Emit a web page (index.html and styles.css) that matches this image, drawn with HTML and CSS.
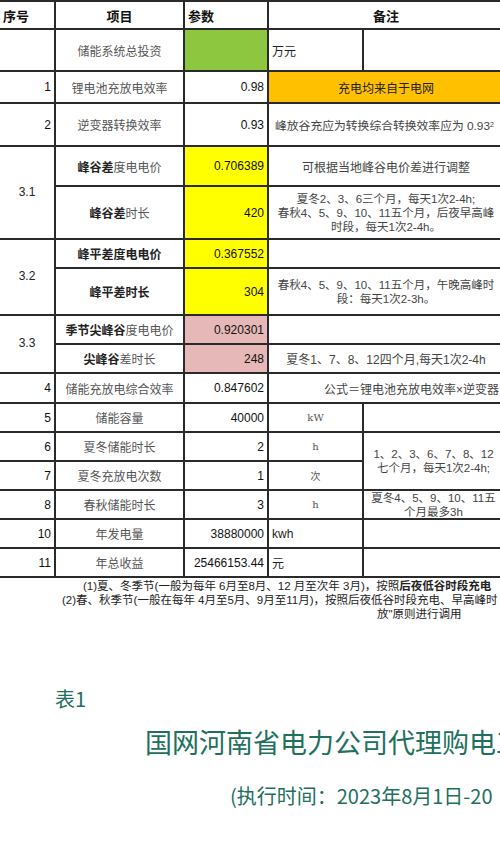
FILE: index.html
```html
<!DOCTYPE html>
<html lang="zh-CN">
<head>
<meta charset="utf-8">
<title>储能收益测算</title>
<link rel="stylesheet" href="styles.css">
</head>
<body>
<div class="sheet">
  <div class="c hd">序号</div>
  <div class="c hd ctr">项目</div>
  <div class="c hd">参数</div>
  <div class="c hd ctr span2">备注</div>

  <div class="c"></div>
  <div class="c ctr item">储能系统总投资</div>
  <div class="c green"></div>
  <div class="c item unit-l">万元</div>
  <div class="c"></div>

  <div class="c num">1</div>
  <div class="c ctr item">锂电池充放电效率</div>
  <div class="c num">0.98</div>
  <div class="c ctr span2 orange">充电均来自于电网</div>

  <div class="c num">2</div>
  <div class="c ctr item">逆变器转换效率</div>
  <div class="c num">0.93</div>
  <div class="c span2 note-l">峰放谷充应为转换综合转换效率应为 0.93<sup>2</sup></div>

  <div class="c ctr rows2 grp">3.1</div>
  <div class="c ctr item"><b>峰谷差</b>度电电价</div>
  <div class="c num yellow">0.706389</div>
  <div class="c ctr span2 note">可根据当地峰谷电价差进行调整</div>
  <div class="c ctr item"><b>峰谷差</b>时长</div>
  <div class="c num yellow">420</div>
  <div class="c ctr span2 note multi">夏冬2、3、6三个月，每天1次2-4h;<br>春秋4、5、9、10、11五个月，后夜早高峰<br>时段，每天1次2-4h。</div>

  <div class="c ctr rows2 grp">3.2</div>
  <div class="c ctr item"><b>峰平差度电电价</b></div>
  <div class="c num yellow">0.367552</div>
  <div class="c span2"></div>
  <div class="c ctr item"><b>峰平差时长</b></div>
  <div class="c num yellow">304</div>
  <div class="c ctr span2 note multi">春秋4、5、9、10、11五个月，午晚高峰时<br>段：每天1次2-3h。</div>

  <div class="c ctr rows2 grp">3.3</div>
  <div class="c ctr item"><b>季节尖峰谷</b>度电电价</div>
  <div class="c num pink">0.920301</div>
  <div class="c span2"></div>
  <div class="c ctr item"><b>尖峰谷</b>差时长</div>
  <div class="c num pink">248</div>
  <div class="c ctr span2 note">夏冬1、7、8、12四个月,每天1次2-4h</div>

  <div class="c num">4</div>
  <div class="c ctr item">储能充放电综合效率</div>
  <div class="c num">0.847602</div>
  <div class="c span2 note formula">公式＝锂电池充放电效率×逆变器充</div>

  <div class="c num">5</div>
  <div class="c ctr item">储能容量</div>
  <div class="c num">40000</div>
  <div class="c ctr unit">kW</div>
  <div class="c"></div>

  <div class="c num">6</div>
  <div class="c ctr item">夏冬储能时长</div>
  <div class="c num">2</div>
  <div class="c ctr unit">h</div>
  <div class="c ctr rows2 note multi">1、2、3、6、7、8、12<br>七个月，每天1次2-4h;</div>

  <div class="c num">7</div>
  <div class="c ctr item">夏冬充放电次数</div>
  <div class="c num">1</div>
  <div class="c ctr unit">次</div>

  <div class="c num">8</div>
  <div class="c ctr item">春秋储能时长</div>
  <div class="c num">3</div>
  <div class="c ctr unit">h</div>
  <div class="c ctr note multi">夏冬4、5、9、10、11五<br>个月最多3h</div>

  <div class="c num">10</div>
  <div class="c ctr item">年发电量</div>
  <div class="c num">38880000</div>
  <div class="c unit-l">kwh</div>
  <div class="c"></div>

  <div class="c num">11</div>
  <div class="c ctr item">年总收益</div>
  <div class="c num">25466153.44</div>
  <div class="c item unit-l">元</div>
  <div class="c"></div>
</div>

<div class="notes">
  <div class="n1">(1)夏、冬季节(一般为每年 6月至8月、12 月至次年 3月)，按照<b>后夜低谷时段充电</b></div>
  <div class="n2">(2)春、秋季节(一般在每年 4月至5月、9月至11月)，按照后夜低谷时段充电、早高峰时</div>
  <div class="n3">放"原则进行调用</div>
</div>

<div class="caption">
  <div class="tag">表1</div>
  <div class="title">国网河南省电力公司代理购电工</div>
  <div class="sub">(执行时间：2023年8月1日-20</div>
</div>
</body>
</html>
```

FILE: styles.css
```css
html, body {
  margin: 0;
  padding: 0;
  overflow: hidden;
  background: #fff;
}

body {
  width: 500px;
  height: 851px;
  font-family: "Liberation Sans", "Noto Sans CJK SC", sans-serif;
  color: #1c1c1c;
}

.sheet {
  display: grid;
  width: 503px;
  grid-template-columns: 54px 127px 82px 93px 1fr;
  grid-template-rows: 26px 40px 30px 41px 38px 51px 27px 45px 27px 27px 28px 27px 27px 27px 27px 27px 27px;
  gap: 2px;
  background: #2a2a2a;
  border-top: 2px solid #2a2a2a;
  border-bottom: 2px solid #2a2a2a;
}

.c {
  background: #fff;
  display: flex;
  align-items: center;
  padding: 0 3px;
  font-size: 12px;
  white-space: nowrap;
  min-width: 0;
}

.hd {
  font-weight: bold;
  font-size: 13px;
  color: #111;
}

.ctr {
  justify-content: center;
  text-align: center;
}

.num {
  justify-content: flex-end;
  color: #111;
}

.span2 {
  grid-column: span 2;
}

.rows2 {
  grid-row: span 2;
}

.grp {
  font-size: 12px;
  color: #222;
  padding-bottom: 2px;
}

.item {
  color: #555;
  font-family: "Noto Sans CJK SC", sans-serif;
  font-size: 12px;
}

.item b {
  color: #222;
  font-weight: bold;
}

.green { background: #8dc63f; }
.yellow { background: #ffff00; }
.orange { background: #ffc000; color: #222; font-family: "Noto Sans CJK SC", sans-serif; }
.pink { background: #e6b8b7; }

.note {
  color: #444;
  font-size: 12px;
}

.multi {
  line-height: 14px;
  font-size: 11.5px;
}

.note-l {
  color: #444;
  padding-left: 6px;
  font-size: 11.8px;
}

.note-l sup {
  font-size: 7px;
  vertical-align: 6px;
}

.formula {
  padding-left: 55px;
  overflow: hidden;
}

.unit {
  color: #555;
  font-family: "DejaVu Serif", "Noto Sans CJK SC", serif;
  font-size: 10px;
}

.unit-l {
  padding-left: 3px;
  color: #222;
}

.notes {
  padding-top: 1px;
  font-size: 11.5px;
  line-height: 14px;
  color: #222;
  white-space: nowrap;
  overflow: hidden;
}

.n1 { padding-left: 83px; }
.n2 { padding-left: 62px; }
.n3 { padding-left: 377px; }

.caption {
  margin-top: 66px;
  color: #216f5d;
  font-family: "Noto Sans CJK SC", sans-serif;
  white-space: nowrap;
  overflow: hidden;
}

.tag {
  padding-left: 55px;
  font-size: 20px;
  line-height: 24px;
}

.title {
  margin-top: 14px;
  padding-left: 145px;
  font-size: 27px;
  line-height: 34px;
}

.sub {
  margin-top: 24px;
  padding-left: 230px;
  font-size: 20px;
  line-height: 26px;
}
```
